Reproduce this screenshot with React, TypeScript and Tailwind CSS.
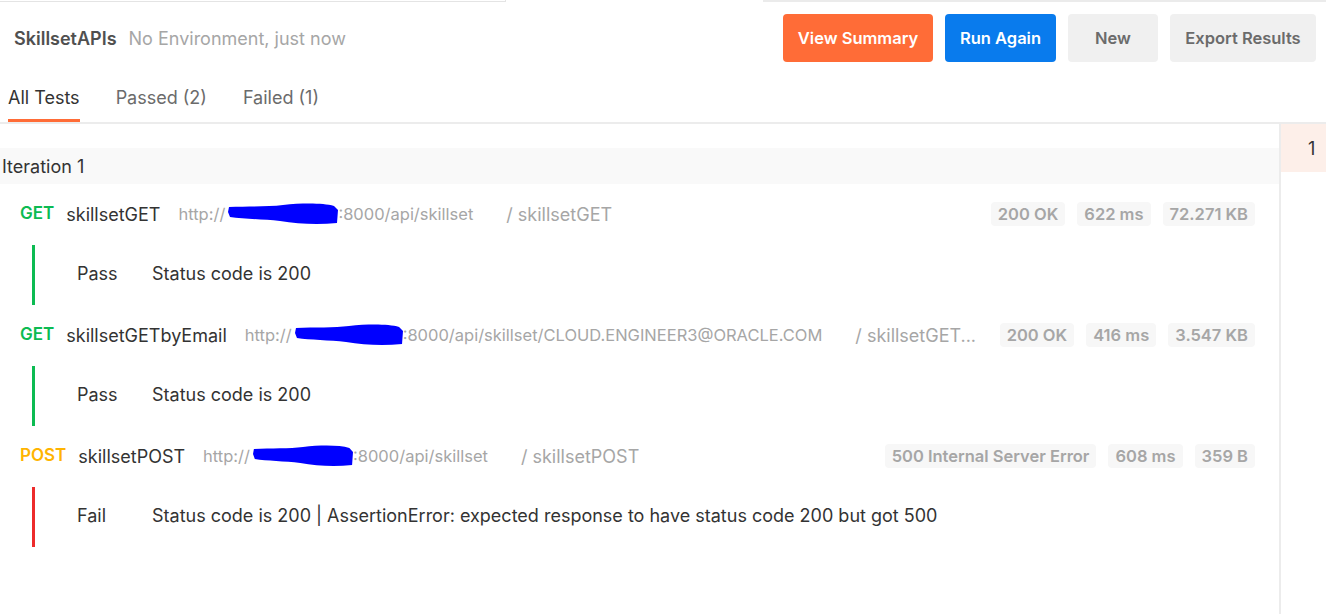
import React from "react";

type Badge = string;
type Req = {
  method: "GET" | "POST";
  name: string;
  pre: string;
  blobW: number;
  post: string;
  folder: string;
  badges: Badge[];
  pass: boolean;
  test: string;
};

const requests: Req[] = [
  {
    method: "GET",
    name: "skillsetGET",
    pre: "http://",
    blobW: 110,
    post: ":8000/api/skillset",
    folder: "/ skillsetGET",
    badges: ["200 OK", "622 ms", "72.271 KB"],
    pass: true,
    test: "Status code is 200",
  },
  {
    method: "GET",
    name: "skillsetGETbyEmail",
    pre: "http://",
    blobW: 108,
    post: ":8000/api/skillset/CLOUD.ENGINEER3@ORACLE.COM",
    folder: "/ skillsetGET...",
    badges: ["200 OK", "416 ms", "3.547 KB"],
    pass: true,
    test: "Status code is 200",
  },
  {
    method: "POST",
    name: "skillsetPOST",
    pre: "http://",
    blobW: 100,
    post: ":8000/api/skillset",
    folder: "/ skillsetPOST",
    badges: ["500 Internal Server Error", "608 ms", "359 B"],
    pass: false,
    test: "Status code is 200 | AssertionError: expected response to have status code 200 but got 500",
  },
];

// marker scribble over the host in the url
function Blob({ w }: { w: number }) {
  return (
    <svg width={w} height="24" viewBox="0 0 110 24" preserveAspectRatio="none" className="shrink-0 ml-[3px]">
      <path
        d="M1 5 C 20 4, 40 5, 55 3 C 75 1, 95 1, 106 4 L 110 8 L 109 21 C 90 23, 70 22, 52 19 C 35 17, 15 17, 2 15 L 0 10 Z"
        fill="#0000ff"
      />
    </svg>
  );
}

export default function App() {
  return (
    <div className="w-[1326px] h-[614px] overflow-hidden bg-white flex flex-col font-['Inter',sans-serif] text-[18px] text-[#333]">
      {/* top strip */}
      <div className="flex h-[2px] shrink-0">
        <div className="w-[506px] border-b border-r border-[#e4e4e4]" />
        <div className="w-[257px]" />
        <div className="flex-1 bg-[#ebebeb]" />
      </div>

      {/* header */}
      <div className="flex items-center justify-between h-[72px] pl-[14px] pr-[10px] shrink-0">
        <div className="flex items-center gap-[12px]">
          <span className="font-semibold text-[#505050]">SkillsetAPIs</span>
          <span className="text-[#a6a6a6]">No Environment, just now</span>
        </div>
        <div className="flex items-center gap-[12px] text-[16.5px]">
          <button className="h-[48px] w-[150px] rounded-[4px] bg-[#ff6c37] text-white font-semibold">View Summary</button>
          <button className="h-[48px] w-[111px] rounded-[4px] bg-[#097bed] text-white font-semibold">Run Again</button>
          <button className="h-[48px] w-[90px] rounded-[4px] bg-[#f0f0f0] text-[#6b6b6b] font-semibold">New</button>
          <button className="h-[48px] w-[146px] rounded-[4px] bg-[#f0f0f0] text-[#6b6b6b] font-semibold">Export Results</button>
        </div>
      </div>

      {/* tabs */}
      <div className="flex items-end h-[50px] px-[8px] gap-[36px] border-b-2 border-[#ececec] shrink-0">
        <div className="h-full flex flex-col justify-center border-b-[3px] border-[#ff6c37] pt-[1px] text-[#333]">All Tests</div>
        <div className="h-full flex items-center pb-[2px] text-[#6b6b6b]">Passed (2)</div>
        <div className="h-full flex items-center pb-[2px] text-[#6b6b6b]">Failed (1)</div>
      </div>

      {/* body */}
      <div className="flex flex-1 min-h-0">
        <div className="flex-1 min-w-0 overflow-hidden pt-[24px]">
          <div className="h-[36px] bg-[#f9f9f9] flex items-center pl-[2px]">Iteration 1</div>
          {requests.map((r) => (
            <div key={r.name}>
              <div className="h-[61px] flex items-center pl-[20px] pr-[24px] pb-[1px]">
                <span className={`font-semibold text-[17px] ${r.method === "GET" ? "text-[#0cbb52]" : "text-[#ffb400]"}`}>{r.method}</span>
                <span className="ml-[12px]">{r.name}</span>
                <span className="ml-[18px] flex items-center text-[16.5px] text-[#a6a6a6] whitespace-nowrap">
                  {r.pre}
                  <Blob w={r.blobW} />
                  {r.post}
                </span>
                <span className="ml-[33px] text-[#a6a6a6] whitespace-nowrap">{r.folder}</span>
                <div className="ml-auto pl-[20px] flex items-center gap-[12px] text-[16.5px] shrink-0">
                  {r.badges.map((b) => (
                    <span key={b} className="h-[24px] px-[7px] flex items-center rounded-[4px] bg-[#f7f7f7] text-[#a6a6a6] font-semibold whitespace-nowrap">
                      {b}
                    </span>
                  ))}
                </div>
              </div>
              <div className="h-[60px] flex items-stretch pl-[32px]">
                <div className={`w-[3px] ${r.pass ? "bg-[#0cbb52]" : "bg-[#ed2b2b]"}`} />
                <div className="flex items-center pl-[42px] pb-[3px]">
                  <span className="w-[75px]">{r.pass ? "Pass" : "Fail"}</span>
                  <span className="whitespace-nowrap">{r.test}</span>
                </div>
              </div>
            </div>
          ))}
        </div>
        <div className="w-[47px] border-l-2 border-[#ececec] shrink-0">
          <div className="h-[48px] bg-[#fdefe9] flex items-center pl-[27px]">1</div>
        </div>
      </div>
    </div>
  );
}
